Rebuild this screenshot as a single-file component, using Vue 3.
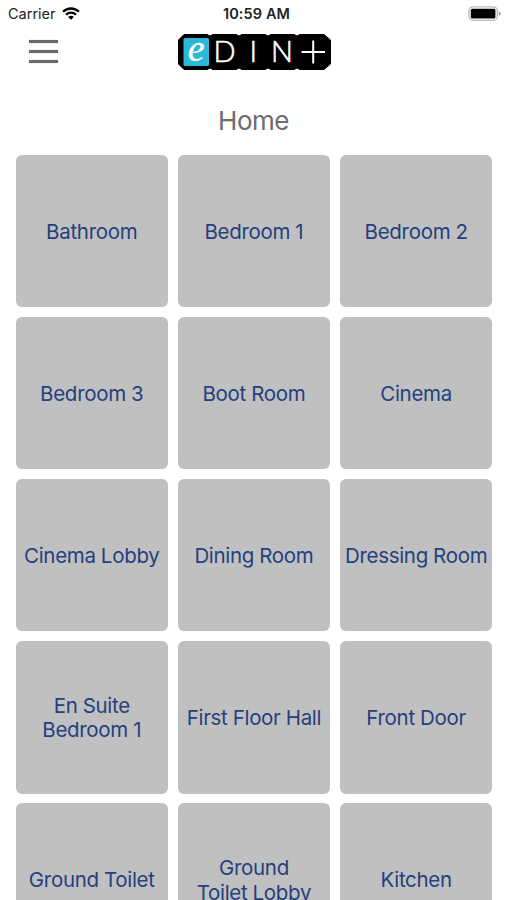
<script setup>
const rooms = [
  ['Bathroom'], ['Bedroom 1'], ['Bedroom 2'],
  ['Bedroom 3'], ['Boot Room'], ['Cinema'],
  ['Cinema Lobby'], ['Dining Room'], ['Dressing Room'],
  ['En Suite', 'Bedroom 1'], ['First Floor Hall'], ['Front Door'],
  ['Ground Toilet'], ['Ground', 'Toilet Lobby'], ['Kitchen'],
]
</script>

<template>
  <div class="screen">
    <div class="status">
      <div class="carrier">
        <span>Carrier</span>
        <svg class="wifi" width="18" height="13" viewBox="0 0 18 13">
          <g fill="none" stroke="#000" stroke-width="2.3">
            <path d="M1.1 4.8C5.5 .4 12.5 .4 16.9 4.8" />
            <path d="M4 7.8C6.8 5 11.2 5 14 7.8" />
          </g>
          <path d="M6.1 9.9C7.7 8.3 10.3 8.3 11.9 9.9L9 12.8Z" />
        </svg>
      </div>
      <div class="time">10:59 AM</div>
      <div class="power">
        <svg width="34" height="16" viewBox="0 0 34 16">
          <rect x=".9" y=".9" width="28.4" height="13.4" rx="4" fill="#fff" stroke="#b9b9b9" stroke-width="1.3" />
          <rect x="2.8" y="2.8" width="24.6" height="9.6" rx="1.5" />
          <path d="M30.8 5.4Q32.8 6 32.8 7.6T30.8 9.8Z" fill="#999" />
        </svg>
      </div>
    </div>
    <header class="bar">
      <button class="menu" aria-label="Menu"><i></i><i></i><i></i></button>
      <svg class="logo" width="154" height="36" viewBox="0 0 154 36">
        <path d="M6 .5H29L32 2L35 .5H58L61 2L64 .5H87L90 2L93 .5H116L119 2L122 .5H146L152.500 6V30L146 35.500H122L119 34L116 35.500H93L90 34L87 35.500H64L61 34L58 35.500H35L32 34L29 35.500H6L.5 30V6Z" stroke="#000" stroke-linejoin="round" />
        <rect x="5.5" y="4" width="25.5" height="28" rx="1.500" fill="#2bb8d6" />
        <text class="e" x="9.700" y="26.500">e</text>
        <text class="din" x="35.500" y="28.200">D</text>
        <text class="din" x="71.500" y="28.200">I</text>
        <text class="din" x="93" y="28.200">N</text>
        <path d="M123.500 18H147M135.200 6.500V29.500" stroke="#fff" stroke-width="2" />
      </svg>
    </header>
    <h1>Home</h1>
    <main class="grid">
      <button v-for="(room, n) in rooms" :key="n" class="tile">
        <span v-for="line in room" :key="line">{{ line }}</span>
      </button>
    </main>
  </div>
</template>

<style>
body { margin: 0; background: #fff; overflow: hidden; }
</style>

<style scoped>
.screen {
  width: 507px;
  height: 900px;
  box-sizing: border-box;
  overflow: hidden;
  background: #fff;
  font-family: Inter, "Liberation Sans", sans-serif;
}
button { border: 0; padding: 0; margin: 0; font-family: inherit; }
.status {
  display: grid;
  grid-template-columns: 1fr auto 1fr;
  align-items: center;
  height: 27px;
  padding: 0 5px 0 8px;
  font-size: 14.5px;
  color: #222;
}
.carrier { display: flex; align-items: center; gap: 6px; }
.time { font-weight: 600; letter-spacing: .1px; padding-left: 3px; }
.power { display: flex; justify-content: flex-end; }
.bar { display: flex; height: 48px; padding: 7px 0 0 29px; box-sizing: border-box; }
.menu {
  display: flex;
  flex-direction: column;
  gap: 7px;
  width: 29px;
  height: 26px;
  margin-top: 6px;
  background: none;
}
.menu i { display: block; width: 29px; height: 3px; background: #6a6a6a; box-shadow: 0 0 1px #888; }
.logo { margin-left: 119.5px; }
.e { font: italic 38px "Liberation Serif", serif; fill: #fff; stroke: #fff; stroke-width: .3px; }
.din { font: 300 29px Lato, sans-serif; fill: #fff; stroke: #fff; stroke-width: .6px; }
h1 {
  margin: 0;
  height: 79.5px;
  line-height: 92px;
  text-align: center;
  font-size: 26px;
  letter-spacing: -.5px;
  font-weight: 400;
  color: #6d6d6d;
}
.grid {
  display: grid;
  grid-template-columns: repeat(3, 152.500px);
  grid-auto-rows: 152.500px;
  gap: 9.700px;
  padding-left: 15.500px;
}
.tile {
  display: flex;
  flex-direction: column;
  align-items: center;
  justify-content: center;
  padding-top: 2px;
  border-radius: 6px;
  background: #c0c0c0;
  color: #24407f;
  font-size: 20.500px;
  letter-spacing: -.3px;
  word-spacing: -.300px;
  line-height: 24.300px;
  white-space: nowrap;
}
</style>
